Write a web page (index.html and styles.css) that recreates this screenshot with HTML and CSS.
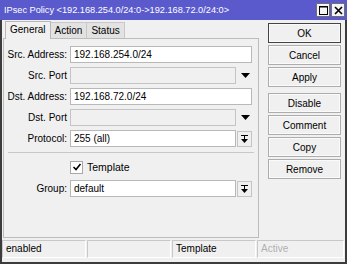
FILE: index.html
```html
<!DOCTYPE html>
<html>
<head>
    <title>IPsec Policy</title>
    <link rel="stylesheet" href="styles.css">
</head>
<body>
    <div class="window">
        <div class="titlebar">
            <span class="title">IPsec Policy &lt;192.168.254.0/24:0-&gt;192.168.72.0/24:0&gt;</span>
            <div class="winbtns">
                <span class="winbtn"><svg width="11" height="11" viewBox="0 0 11 11"><rect x="1.5" y="1.5" width="8" height="8" fill="none" stroke="#000" stroke-width="1"/><line x1="1" y1="2" x2="10" y2="2" stroke="#000" stroke-width="1"/></svg></span>
                <span class="winbtn"><svg width="11" height="11" viewBox="0 0 11 11"><path d="M2 2 L9 9 M9 2 L2 9" stroke="#000" stroke-width="1.6"/></svg></span>
            </div>
        </div>

        <div class="content">
            <div class="main">
                <div class="tabs">
                    <span class="tab active">General</span>
                    <span class="tab">Action</span>
                    <span class="tab">Status</span>
                </div>
                <div class="panel">
                    <div class="row">
                        <label>Src. Address:</label>
                        <div class="field wide">192.168.254.0/24</div>
                    </div>
                    <div class="row">
                        <label>Src. Port</label>
                        <div class="field off"></div>
                        <span class="arrow"><svg width="9" height="5" viewBox="0 0 9 5"><path d="M0 0 L9 0 L4.5 5 Z" fill="#000"/></svg></span>
                    </div>
                    <div class="row">
                        <label>Dst. Address:</label>
                        <div class="field wide">192.168.72.0/24</div>
                    </div>
                    <div class="row">
                        <label>Dst. Port</label>
                        <div class="field off"></div>
                        <span class="arrow"><svg width="9" height="5" viewBox="0 0 9 5"><path d="M0 0 L9 0 L4.5 5 Z" fill="#000"/></svg></span>
                    </div>
                    <div class="row">
                        <label>Protocol:</label>
                        <div class="field">255 (all)</div>
                        <span class="dropbtn"><svg width="9" height="10" viewBox="0 0 9 10"><line x1="1" y1="1.5" x2="8" y2="1.5" stroke="#000"/><line x1="4.5" y1="2" x2="4.5" y2="6" stroke="#000"/><path d="M1 5 L8 5 L4.5 9 Z" fill="#000"/></svg></span>
                    </div>

                    <div class="sep"></div>

                    <div class="row check-row">
                        <label></label>
                        <span class="checkbox"><svg width="10" height="10" viewBox="0 0 10 10"><path d="M1.5 5 L4 7.5 L8.5 2" fill="none" stroke="#000" stroke-width="1.6"/></svg></span>
                        <span class="check-label">Template</span>
                    </div>
                    <div class="row">
                        <label>Group:</label>
                        <div class="field">default</div>
                        <span class="dropbtn"><svg width="9" height="10" viewBox="0 0 9 10"><line x1="1" y1="1.5" x2="8" y2="1.5" stroke="#000"/><line x1="4.5" y1="2" x2="4.5" y2="6" stroke="#000"/><path d="M1 5 L8 5 L4.5 9 Z" fill="#000"/></svg></span>
                    </div>
                </div>
            </div>

            <div class="buttons">
                <button class="btn default">OK</button>
                <button class="btn">Cancel</button>
                <button class="btn">Apply</button>
                <button class="btn spaced">Disable</button>
                <button class="btn">Comment</button>
                <button class="btn">Copy</button>
                <button class="btn">Remove</button>
            </div>
        </div>

        <div class="statusbar">
            <span class="cell">enabled</span>
            <span class="cell"></span>
            <span class="cell">Template</span>
            <span class="cell dim">Active</span>
        </div>
    </div>
</body>
</html>
```

FILE: styles.css
```css
* { box-sizing: border-box; }
body { margin: 0; background: #f0f0f0; font-family: "Liberation Sans", Arial, sans-serif; font-size: 10px; color: #000; }
.window { width: 347px; height: 264px; background: #f0f0f0; border: 2px solid #3c3c3c; border-top: none; display: flex; flex-direction: column; }

.titlebar { height: 20px; margin: 0 -2px; background: #5a5acc; color: #fff; display: flex; align-items: center; justify-content: space-between; padding: 0 2px 0 4px; }
.title { font-size: 9.2px; white-space: nowrap; }
.winbtns { display: flex; gap: 1px; }
.winbtn { width: 14px; height: 14px; background: #f4f4f4; border: 1px solid #707070; display: flex; align-items: center; justify-content: center; }

.content { height: 218px; display: flex; gap: 9px; }
.main { width: 256px; margin-left: 1px; display: flex; flex-direction: column; }

.tabs { height: 18px; display: flex; align-items: flex-end; padding-left: 2px; }
.tab { height: 16px; padding: 0 4px; line-height: 15px; background: #e2e2e2; border: 1px solid #c8c8c8; border-bottom: none; margin-right: -1px; }
.tab.active { height: 18px; line-height: 16px; background: #f0f0f0; border-color: #b8b8b8; position: relative; z-index: 1; margin-bottom: -1px; }

.panel { flex: 1; border: 1px solid #bcbcbc; padding: 7px 0 0 0; display: flex; flex-direction: column; gap: 4px; }
.row { height: 17px; display: flex; align-items: center; }
.row label { width: 64px; text-align: right; padding-right: 1px; margin-right: 2px; white-space: nowrap; }
.field { width: 166px; height: 17px; background: #fff; border: 1px solid #b8b8b8; line-height: 15px; padding-left: 3px; }
.field.wide { width: 182px; }
.field.off { background: #f0f0f0; border-color: #c4c4c4; }
.arrow { width: 16px; display: flex; justify-content: center; padding-left: 2px; }
.dropbtn { width: 15px; height: 16px; margin-left: 1px; border: 1px solid #c4c4c4; display: flex; align-items: center; justify-content: center; }

.sep { height: 1px; background: #c8c8c8; margin: 1px 4px 3px 4px; }
.check-row { height: 14px; margin-bottom: 2px; }
.checkbox { width: 13px; height: 13px; border: 1px solid #a8a8a8; background: #fff; display: flex; align-items: center; justify-content: center; }
.check-label { margin-left: 4px; font-size: 10.5px; }

.buttons { width: 73px; padding-top: 3px; display: flex; flex-direction: column; gap: 2px; }
.btn { height: 20px; font: inherit; font-size: 10px; background: #f0f0f0; border: 1px solid #adadad; outline: 1px solid #fafafa; outline-offset: -2px; padding: 0; }
.btn.default { border-color: #444; }
.btn.spaced { margin-top: 4px; }

.statusbar { height: 18px; margin-top: 2px; display: grid; grid-template-columns: 85px 85px 85px 1fr; gap: 0; }
.cell { border: 1px solid #c8c8c8; border-right-color: #fff; border-bottom-color: #fff; line-height: 16px; padding-left: 3px; margin-right: 1px; }
.cell.dim { color: #b0b0b0; }
```
